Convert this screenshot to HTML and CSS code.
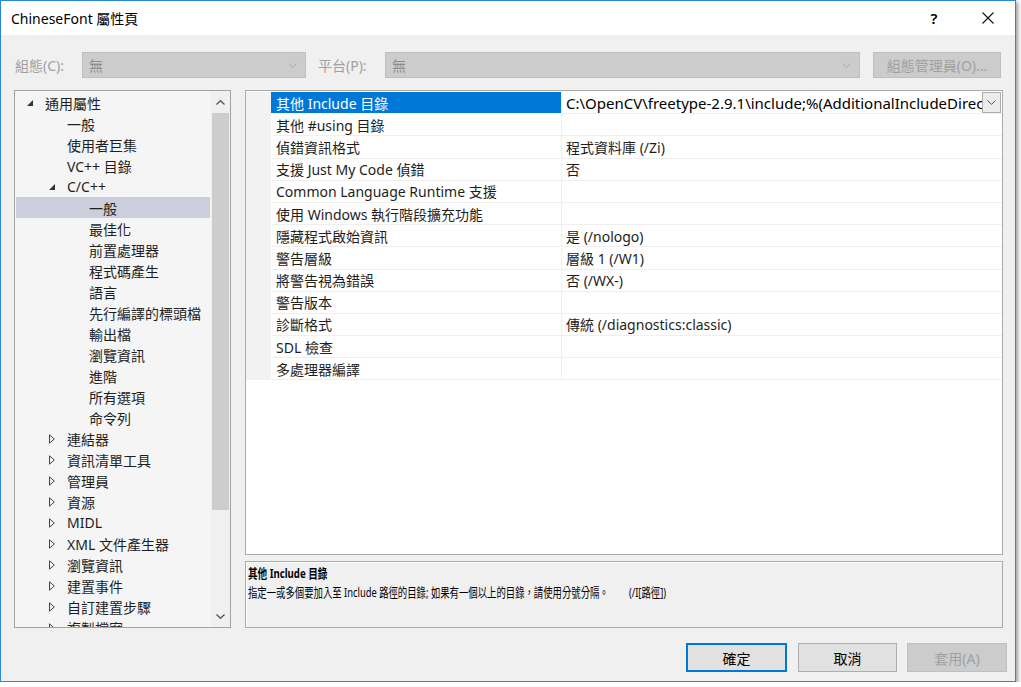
FILE: index.html
```html
<!DOCTYPE html>
<html>
<head>
<meta charset="utf-8">
<link rel="stylesheet" href="styles.css">
</head>
<body>
<div class="window">
  <div class="titlebar">
    <span class="title">ChineseFont 屬性頁</span>
    <span class="cap-btn help">?</span>
    <span class="cap-btn close"><svg width="12" height="12" viewBox="0 0 12 12"><path d="M0.5 0.5 L11.5 11.5 M11.5 0.5 L0.5 11.5" stroke="#111" stroke-width="1.1" fill="none"/></svg></span>
  </div>
  <div class="toolbar">
    <span class="lbl">組態(C):</span>
    <div class="combo c1"><span class="ctext">無</span><svg width="9" height="5" viewBox="0 0 9 5"><path d="M0.5 0.5 L4.5 4.5 L8.5 0.5" stroke="#a8a8a8" fill="none"/></svg></div>
    <span class="lbl lbl2">平台(P):</span>
    <div class="combo c2"><span class="ctext">無</span><svg width="9" height="5" viewBox="0 0 9 5"><path d="M0.5 0.5 L4.5 4.5 L8.5 0.5" stroke="#a8a8a8" fill="none"/></svg></div>
    <div class="cfg-btn">組態管理員(O)...</div>
  </div>
  <div class="main">
    <div class="tree">
      <div class="tree-list">
        <div class="trow l0"><span class="arr"><svg width="6" height="6" viewBox="0 0 6 6"><path d="M6 0 L6 6 L0 6 Z" fill="#333"/></svg></span>通用屬性</div>
        <div class="trow l1"><span class="arr"></span>一般</div>
        <div class="trow l1"><span class="arr"></span>使用者巨集</div>
        <div class="trow l1"><span class="arr"></span>VC++ 目錄</div>
        <div class="trow l1"><span class="arr"><svg width="6" height="6" viewBox="0 0 6 6"><path d="M6 0 L6 6 L0 6 Z" fill="#333"/></svg></span>C/C++</div>
        <div class="trow l2 sel"><span class="arr"></span>一般</div>
        <div class="trow l2"><span class="arr"></span>最佳化</div>
        <div class="trow l2"><span class="arr"></span>前置處理器</div>
        <div class="trow l2"><span class="arr"></span>程式碼產生</div>
        <div class="trow l2"><span class="arr"></span>語言</div>
        <div class="trow l2"><span class="arr"></span>先行編譯的標頭檔</div>
        <div class="trow l2"><span class="arr"></span>輸出檔</div>
        <div class="trow l2"><span class="arr"></span>瀏覽資訊</div>
        <div class="trow l2"><span class="arr"></span>進階</div>
        <div class="trow l2"><span class="arr"></span>所有選項</div>
        <div class="trow l2"><span class="arr"></span>命令列</div>
        <div class="trow l1"><span class="arr"><svg width="6" height="10" viewBox="0 0 6 10"><path d="M0.5 0.8 L5.3 5 L0.5 9.2 Z" fill="none" stroke="#444"/></svg></span>連結器</div>
        <div class="trow l1"><span class="arr"><svg width="6" height="10" viewBox="0 0 6 10"><path d="M0.5 0.8 L5.3 5 L0.5 9.2 Z" fill="none" stroke="#444"/></svg></span>資訊清單工具</div>
        <div class="trow l1"><span class="arr"><svg width="6" height="10" viewBox="0 0 6 10"><path d="M0.5 0.8 L5.3 5 L0.5 9.2 Z" fill="none" stroke="#444"/></svg></span>管理員</div>
        <div class="trow l1"><span class="arr"><svg width="6" height="10" viewBox="0 0 6 10"><path d="M0.5 0.8 L5.3 5 L0.5 9.2 Z" fill="none" stroke="#444"/></svg></span>資源</div>
        <div class="trow l1"><span class="arr"><svg width="6" height="10" viewBox="0 0 6 10"><path d="M0.5 0.8 L5.3 5 L0.5 9.2 Z" fill="none" stroke="#444"/></svg></span>MIDL</div>
        <div class="trow l1"><span class="arr"><svg width="6" height="10" viewBox="0 0 6 10"><path d="M0.5 0.8 L5.3 5 L0.5 9.2 Z" fill="none" stroke="#444"/></svg></span>XML 文件產生器</div>
        <div class="trow l1"><span class="arr"><svg width="6" height="10" viewBox="0 0 6 10"><path d="M0.5 0.8 L5.3 5 L0.5 9.2 Z" fill="none" stroke="#444"/></svg></span>瀏覽資訊</div>
        <div class="trow l1"><span class="arr"><svg width="6" height="10" viewBox="0 0 6 10"><path d="M0.5 0.8 L5.3 5 L0.5 9.2 Z" fill="none" stroke="#444"/></svg></span>建置事件</div>
        <div class="trow l1"><span class="arr"><svg width="6" height="10" viewBox="0 0 6 10"><path d="M0.5 0.8 L5.3 5 L0.5 9.2 Z" fill="none" stroke="#444"/></svg></span>自訂建置步驟</div>
        <div class="trow l1"><span class="arr"><svg width="6" height="10" viewBox="0 0 6 10"><path d="M0.5 0.8 L5.3 5 L0.5 9.2 Z" fill="none" stroke="#444"/></svg></span>複製檔案</div>
      </div>
      <div class="vscroll">
        <div class="sb-btn"><svg width="9" height="5" viewBox="0 0 9 5"><path d="M0.5 4.5 L4.5 0.7 L8.5 4.5" stroke="#555" stroke-width="1.3" fill="none"/></svg></div>
        <div class="sb-track"><div class="thumb"></div></div>
        <div class="sb-btn"><svg width="9" height="5" viewBox="0 0 9 5"><path d="M0.5 0.5 L4.5 4.3 L8.5 0.5" stroke="#555" stroke-width="1.3" fill="none"/></svg></div>
      </div>
    </div>
    <div class="right">
      <div class="grid">
        <div class="prow"><span class="gut"></span><span class="pname sel">其他 Include 目錄</span><span class="pval first"><span class="vtext">C:\OpenCV\freetype-2.9.1\include;%(AdditionalIncludeDirectories)</span><span class="dd"><svg width="9" height="5" viewBox="0 0 9 5"><path d="M0.5 0.5 L4.5 4.3 L8.5 0.5" stroke="#555" fill="none"/></svg></span></span></div>
        <div class="prow"><span class="gut"></span><span class="pname">其他 #using 目錄</span><span class="pval"></span></div>
        <div class="prow"><span class="gut"></span><span class="pname">偵錯資訊格式</span><span class="pval">程式資料庫 (/Zi)</span></div>
        <div class="prow"><span class="gut"></span><span class="pname">支援 Just My Code 偵錯</span><span class="pval">否</span></div>
        <div class="prow"><span class="gut"></span><span class="pname">Common Language Runtime 支援</span><span class="pval"></span></div>
        <div class="prow"><span class="gut"></span><span class="pname">使用 Windows 執行階段擴充功能</span><span class="pval"></span></div>
        <div class="prow"><span class="gut"></span><span class="pname">隱藏程式啟始資訊</span><span class="pval">是 (/nologo)</span></div>
        <div class="prow"><span class="gut"></span><span class="pname">警告層級</span><span class="pval">層級 1 (/W1)</span></div>
        <div class="prow"><span class="gut"></span><span class="pname">將警告視為錯誤</span><span class="pval">否 (/WX-)</span></div>
        <div class="prow"><span class="gut"></span><span class="pname">警告版本</span><span class="pval"></span></div>
        <div class="prow"><span class="gut"></span><span class="pname">診斷格式</span><span class="pval">傳統 (/diagnostics:classic)</span></div>
        <div class="prow"><span class="gut"></span><span class="pname">SDL 檢查</span><span class="pval"></span></div>
        <div class="prow"><span class="gut"></span><span class="pname">多處理器編譯</span><span class="pval"></span></div>
      </div>
      <div class="desc">
        <div class="desc-title">其他 Include 目錄</div>
        <div class="desc-text">指定一或多個要加入至 Include 路徑的目錄; 如果有一個以上的目錄，請使用分號分隔。<span class="desc-sw">(/I[路徑])</span></div>
      </div>
    </div>
  </div>
  <div class="footer">
    <div class="btn ok">確定</div>
    <div class="btn cancel">取消</div>
    <div class="btn apply">套用(A)</div>
  </div>
</div>
</body>
</html>
```

FILE: styles.css
```css
* { box-sizing: border-box; }
body {
  margin: 0;
  background: #ffffff;
  font-family: "Noto Sans", "Noto Sans CJK TC", sans-serif;
  font-size: 14px;
  color: #000;
}
.window {
  width: 1016px;
  height: 682px;
  border: 1px solid #2b88d8;
  background: #f0f0f0;
  box-shadow: 2px 2px 4px rgba(0,0,0,0.4);
  display: flex;
  flex-direction: column;
}
.titlebar {
  flex: none;
  height: 34px;
  background: #fff;
  display: flex;
  align-items: center;
}
.title { flex: 1; padding-left: 10px; font-size: 14px; color: #000; }
.cap-btn {
  width: 54px;
  height: 34px;
  display: flex;
  align-items: center;
  justify-content: center;
}
.help { font-size: 15px; font-weight: 600; }

.toolbar {
  flex: none;
  margin-top: 17px;
  height: 26px;
  display: flex;
  align-items: center;
  padding-left: 14px;
}
.lbl { width: 67px; color: #a0a0a0; }
.combo {
  height: 26px;
  background: #cccccc;
  border: 1px solid #bfbfbf;
  display: flex;
  align-items: center;
  padding-left: 6px;
  padding-right: 8px;
  color: #8c8c8c;
}
.combo .ctext { flex: 1; }
.c1 { width: 224px; margin-right: 12px; }
.c2 { width: 475px; margin-right: 13px; }
.cfg-btn {
  width: 128px;
  height: 26px;
  background: #cccccc;
  border: 1px solid #bfbfbf;
  color: #a0a0a0;
  display: flex;
  align-items: center;
  justify-content: center;
}

.main {
  flex: none;
  margin-top: 12px;
  height: 538px;
  display: flex;
  padding-left: 13px;
  gap: 14px;
}
.tree {
  width: 217px;
  border: 1px solid #a3a3a3;
  background: #f5f5f5;
  display: flex;
  overflow: hidden;
}
.tree-list {
  flex: 1;
  padding-top: 1px;
  overflow: hidden;
}
.trow {
  height: 21px;
  display: flex;
  align-items: center;
  margin: 0 1px;
  white-space: nowrap;
  color: #1e1e1e;
}
.trow.sel { background: #cccedb; }
.arr {
  width: 18px;
  height: 21px;
  display: flex;
  align-items: center;
  flex: none;
}
.l0 { padding-left: 11px; }
.l1 { padding-left: 33px; }
.l2 { padding-left: 55px; }
.vscroll {
  width: 19px;
  background: #f0f0f0;
  display: flex;
  flex-direction: column;
}
.sb-btn {
  height: 22px;
  display: flex;
  align-items: center;
  justify-content: center;
}
.sb-track { flex: 1; }
.thumb { height: 397px; background: #cdcdcd; margin: 0 1px; }

.right {
  width: 758px;
  display: flex;
  flex-direction: column;
  gap: 6px;
}
.grid {
  height: 465px;
  border: 1px solid #acacac;
  background: #fff;
  padding-top: 1px;
}
.prow { display: flex; height: 22.2px; }
.gut { width: 25px; background: #f2f2f2; flex: none; }
.pname {
  width: 291px;
  flex: none;
  border-right: 1px solid #efefef;
  border-bottom: 1px solid #efefef;
  padding-left: 5px;
  display: flex;
  align-items: center;
  white-space: nowrap;
  color: #1e1e1e;
}
.pname.sel { background: #0078d7; color: #fff; border-bottom-color: #fff; }
.pval {
  flex: 1;
  min-width: 0;
  border-bottom: 1px solid #efefef;
  padding-left: 4px;
  display: flex;
  align-items: center;
  white-space: nowrap;
  color: #1e1e1e;
}
.pval.first { padding-right: 1px; }
.vtext { flex: 1; min-width: 0; overflow: hidden; font-size: 15px; color: #000; }
.dd {
  width: 19px;
  height: 21px;
  flex: none;
  border: 1px solid #acacac;
  background: #ececec;
  display: flex;
  align-items: center;
  justify-content: center;
}

.desc {
  height: 67px;
  border: 1px solid #a9a9a9;
  box-shadow: inset 1px 1px 0 #fff;
  background: #f0f0f0;
  padding: 3px 0 0 2px;
}
.desc-title {
  font-size: 13px;
  font-weight: 700;
  line-height: 16px;
  white-space: nowrap;
  transform: scaleX(0.74);
  transform-origin: 0 50%;
}
.desc-text {
  margin-top: 3px;
  font-size: 13px;
  line-height: 16px;
  white-space: nowrap;
  transform: scaleX(0.72);
  transform-origin: 0 50%;
}
.desc-sw { margin-left: 28px; }

.footer {
  flex: none;
  margin-top: 15px;
  height: 29px;
  display: flex;
  justify-content: flex-end;
  padding-right: 8px;
}
.btn {
  height: 29px;
  background: #e1e1e1;
  border: 1px solid #adadad;
  display: flex;
  align-items: center;
  justify-content: center;
  color: #000;
}
.btn.ok { width: 101px; border: 2px solid #0078d7; }
.btn.cancel { width: 99px; margin-left: 11px; }
.btn.apply { width: 100px; margin-left: 10px; background: #cccccc; border-color: #bfbfbf; color: #a0a0a0; }
```
